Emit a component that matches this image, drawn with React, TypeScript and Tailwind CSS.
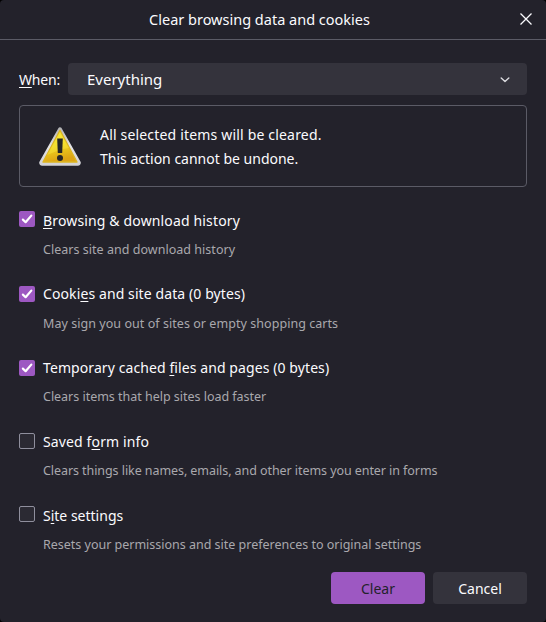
import type { ReactNode } from "react";

type Item = {
  id: string;
  label: ReactNode;
  labelClass: string;
  hint: string;
  hintClass: string;
  checked: boolean;
  boxClass: string;
  rowClass: string;
};

const items: Item[] = [
  {
    id: "history",
    label: (
      <>
        <Key>B</Key>rowsing &amp; download history
      </>
    ),
    labelClass: "tracking-[0.15px]",
    hint: "Clears site and download history",
    hintClass: "mt-[9px] tracking-[0.03px]",
    checked: true,
    boxClass: "mt-0",
    rowClass: "h-[73px]",
  },
  {
    id: "cookies",
    label: (
      <>
        Cooki<Key>e</Key>s and site data (0 bytes)
      </>
    ),
    labelClass: "tracking-[0.1px]",
    hint: "May sign you out of sites or empty shopping carts",
    hintClass: "mt-2.5 tracking-[0.05px]",
    checked: true,
    boxClass: "mt-0.5",
    rowClass: "h-[74px]",
  },
  {
    id: "cache",
    label: (
      <>
        Temporary cached <Key>f</Key>iles and pages (0 bytes)
      </>
    ),
    labelClass: "tracking-[0.09px]",
    hint: "Clears items that help sites load faster",
    hintClass: "mt-[9px] tracking-[-0.02px]",
    checked: true,
    boxClass: "mt-0.5",
    rowClass: "h-[74px]",
  },
  {
    id: "forms",
    label: (
      <>
        Saved f<Key>o</Key>rm info
      </>
    ),
    labelClass: "tracking-[0.13px]",
    hint: "Clears things like names, emails, and other items you enter in forms",
    hintClass: "mt-[9px] tracking-[-0.07px]",
    checked: false,
    boxClass: "mt-px",
    rowClass: "h-[74px]",
  },
  {
    id: "settings",
    label: (
      <>
        S<Key>i</Key>te settings
      </>
    ),
    labelClass: "",
    hint: "Resets your permissions and site preferences to original settings",
    hintClass: "mt-[9px] tracking-[-0.01px]",
    checked: false,
    boxClass: "mt-0",
    rowClass: "h-[66px]",
  },
];

// Underlined access key inside a label
function Key({ children }: { children: ReactNode }) {
  return <span className="underline decoration-1 underline-offset-2">{children}</span>;
}

function WarningIcon() {
  return (
    <svg width="42" height="39" viewBox="0 0 42 39" className="shrink-0">
      <defs>
        <linearGradient id="rim" x1="0" y1="0" x2="0" y2="1">
          <stop offset="0" stopColor="#b5b5b8" />
          <stop offset="0.5" stopColor="#e4e4e4" />
          <stop offset="1" stopColor="#d2d2d6" />
        </linearGradient>
        <linearGradient id="fill" x1="0" y1="0" x2="0.25" y2="1">
          <stop offset="0" stopColor="#f4e92e" />
          <stop offset="0.55" stopColor="#efd51f" />
          <stop offset="1" stopColor="#dda414" />
        </linearGradient>
      </defs>
      <path
        d="M21 2.2 L39.9 35.6 Q40 36.8 38.8 36.8 H3.2 Q2 36.8 2.1 35.6 Z"
        fill="url(#rim)"
        stroke="url(#rim)"
        strokeWidth="3.8"
        strokeLinejoin="round"
      />
      <path
        d="M21 3.4 L38 35 H4 Z"
        fill="url(#fill)"
        stroke="#dcb522"
        strokeWidth="1.4"
        strokeLinejoin="round"
      />
      <path d="M21 4.5 L30 21 Q22 22 8 28 Z" fill="#fff04a" opacity="0.35" />
      <path d="M18.2 11.5 H23.8 L23.2 26 H18.8 Z" fill="#262626" />
      <circle cx="21" cy="31" r="3" fill="#262626" />
    </svg>
  );
}

function Checkbox({ checked, className }: { checked: boolean; className: string }) {
  if (!checked) {
    return (
      <span
        className={`size-4 shrink-0 rounded-[2px] border border-[#8f8f9d] bg-[#2b2a33] ${className}`}
      />
    );
  }
  return (
    <span className={`size-4 shrink-0 rounded-[2px] bg-[#9d58c2] ${className}`}>
      <svg width="16" height="16" viewBox="0 0 16 16" fill="none">
        <path
          d="M3.9 8.6 L6.6 11.2 L12.3 4.6"
          stroke="#fff"
          strokeWidth="2.2"
          strokeLinecap="round"
          strokeLinejoin="round"
        />
      </svg>
    </span>
  );
}

export default function App() {
  return (
    <div className="h-[622px] w-[546px] bg-black font-['Noto_Sans',sans-serif] text-[14px] text-[#fbfbfe]">
      <div className="flex h-full flex-col overflow-hidden rounded-[4px] bg-[#23222b]">
        <header className="grid h-10 shrink-0 grid-cols-[1fr_auto_1fr] items-center border-b border-[#5b5b66]">
          <span />
          <h1 className="pr-[27px] text-[14.5px] whitespace-nowrap">
            Clear browsing data and cookies
          </h1>
          <button className="mr-3.5 justify-self-end" aria-label="Close">
            <svg width="12" height="12" viewBox="0 0 12 12" fill="none" className="-mt-0.5">
              <path d="M0.5 0.5 L11.5 11.5 M11.5 0.5 L0.5 11.5" stroke="#fbfbfe" strokeWidth="1.3" />
            </svg>
          </button>
        </header>

        <main className="flex flex-1 flex-col px-[19px] pt-[23px]">
          <div className="flex h-8 items-center">
            <label className="w-[49px] shrink-0 tracking-[-0.2px] whitespace-nowrap">
              <Key>W</Key>hen:
            </label>
            <button className="flex h-8 flex-1 items-center justify-between rounded bg-[#34333c] pr-[17px] pl-[19px]">
              <span className="text-[15px]">Everything</span>
              <svg width="10" height="6" viewBox="0 0 10 6" fill="none" className="mt-0.5">
                <path
                  d="M1.2 1 L5 4.5 L8.8 1"
                  stroke="#dcdce0"
                  strokeWidth="1.4"
                  strokeLinecap="round"
                  strokeLinejoin="round"
                />
              </svg>
            </button>
          </div>

          <section className="mt-2.5 flex h-[82px] items-center gap-[19px] rounded border border-[#5b5b66] pl-[19px]">
            <WarningIcon />
            <div className="pt-0.5 leading-6 whitespace-nowrap">
              <p className="tracking-[0.18px]">All selected items will be cleared.</p>
              <p>This action cannot be undone.</p>
            </div>
          </section>

          <ul className="mt-6 h-[361px] whitespace-nowrap">
            {items.map((item) => (
              <li key={item.id} className={`flex gap-2 ${item.rowClass}`}>
                <Checkbox checked={item.checked} className={item.boxClass} />
                <div>
                  <p className={`leading-5 ${item.labelClass}`}>{item.label}</p>
                  <p className={`text-[12.5px] leading-5 text-[#a9a8ad] ${item.hintClass}`}>
                    {item.hint}
                  </p>
                </div>
              </li>
            ))}
          </ul>

          <footer className="flex justify-end gap-2">
            <button className="h-8 w-[94px] rounded bg-[#9d58c2] text-[#23222b]">Clear</button>
            <button className="h-8 w-[94px] rounded bg-[#34333c]">Cancel</button>
          </footer>
        </main>
      </div>
    </div>
  );
}
